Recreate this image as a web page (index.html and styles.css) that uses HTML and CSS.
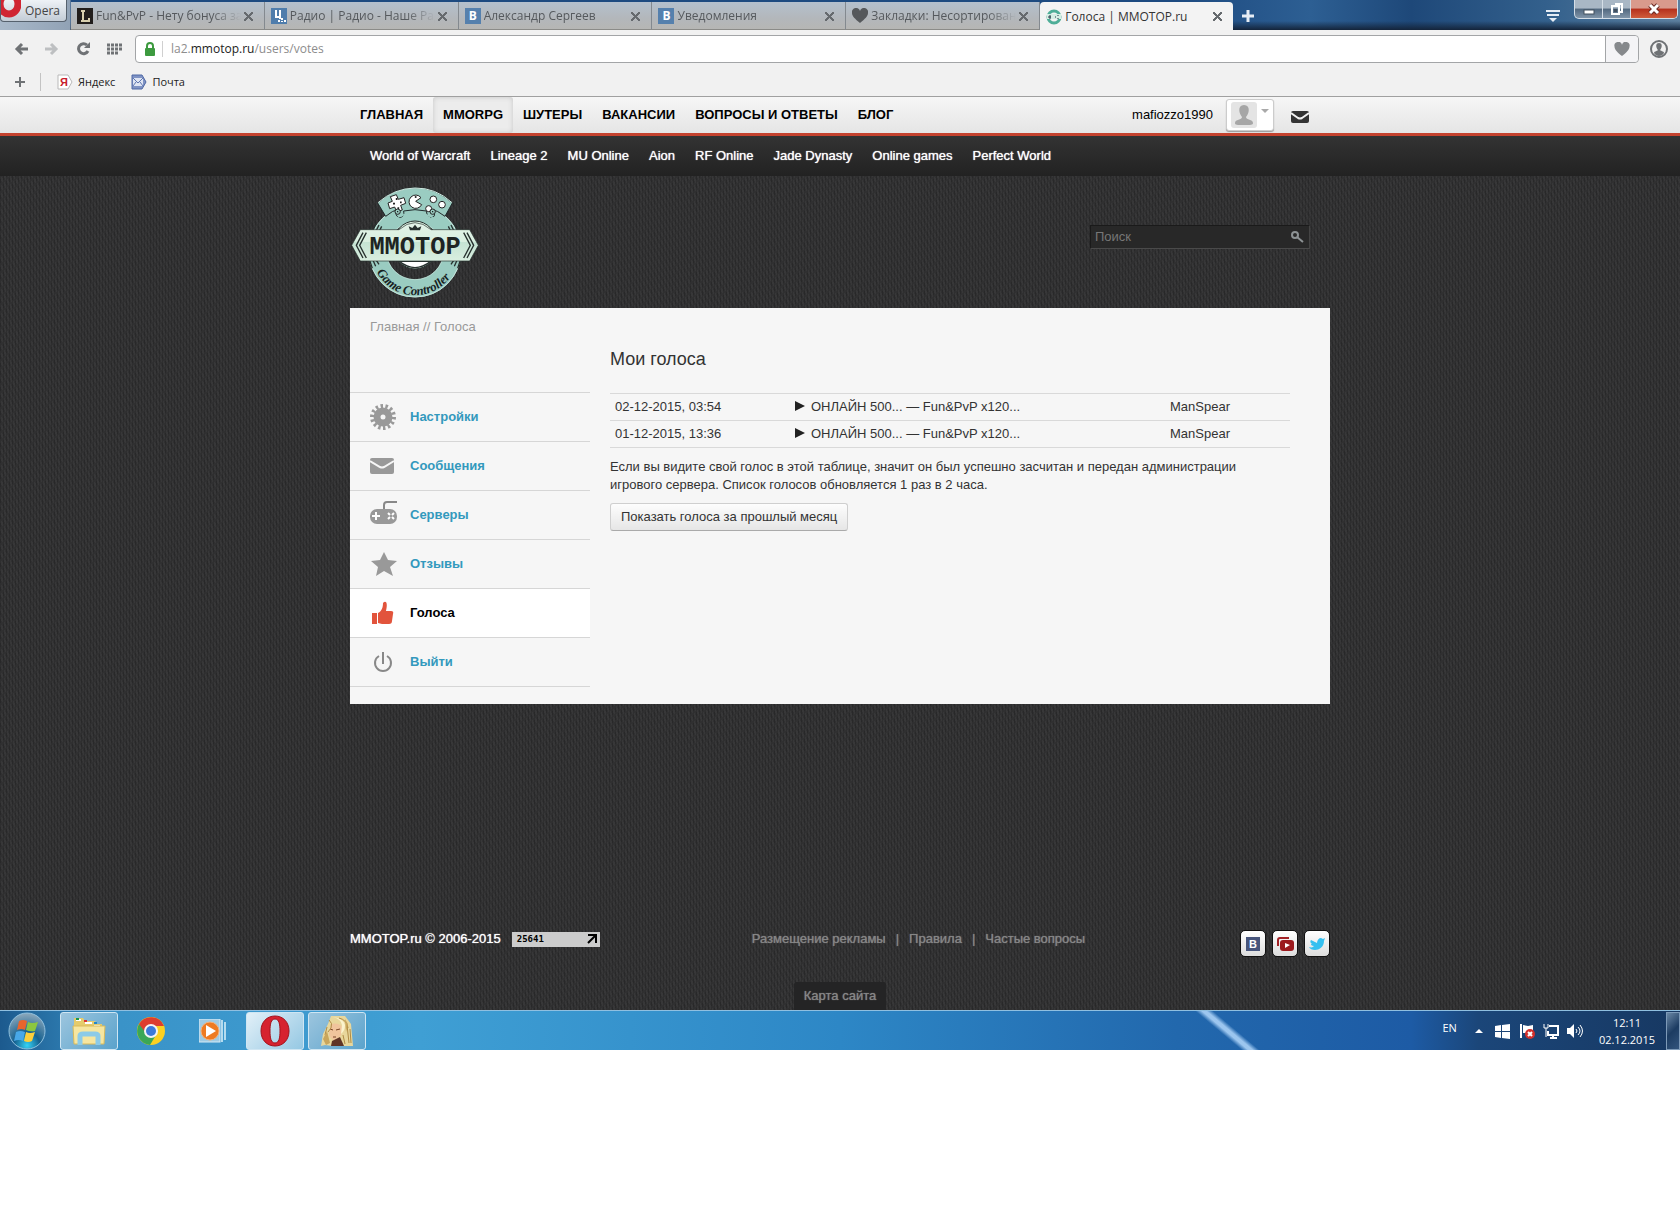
FILE: index.html
```html
<!DOCTYPE html>
<html lang="ru">
<head>
    <meta charset="UTF-8">
    <title>Голоса | MMOTOP.ru</title>
    <link rel="stylesheet" href="styles.css">
</head>
<body>
    <!-- browser window -->
    <header class="browser">
        <div class="titlebar">
            <button type="button" class="opera-btn">
                <svg width="20" height="22" viewBox="0 0 20 22"><ellipse cx="8" cy="4" rx="9" ry="10" fill="none" stroke="#d02532" stroke-width="7"/></svg>
                Opera
            </button>
            <div class="tabs">
                <div class="tab">
                    <svg width="16" height="16" viewBox="0 0 16 16"><rect width="16" height="16" fill="#221e1c"/><path d="M4 3h4M6 3v10M4 13h8v-3" fill="none" stroke="#d8cfae" stroke-width="2"/></svg>
                    <a href="#">Fun&amp;PvP - Нету бонуса за</a>
                    <button type="button" class="close" aria-label="Закрыть"></button>
                </div>
                <div class="tab">
                    <svg width="16" height="16" viewBox="0 0 16 16"><rect width="16" height="16" fill="#4f7dac"/><path d="M5 2v8M5 9h5M9 2v9M8 12v2M11 10v2M11 13v1M14 12v2" fill="none" stroke="#fff" stroke-width="2"/></svg>
                    <a href="#">Радио | Радио - Наше Рад</a>
                    <button type="button" class="close" aria-label="Закрыть"></button>
                </div>
                <div class="tab">
                    <span class="vk">B</span>
                    <a href="#">Александр Сергеев</a>
                    <button type="button" class="close" aria-label="Закрыть"></button>
                </div>
                <div class="tab">
                    <span class="vk">B</span>
                    <a href="#">Уведомления</a>
                    <button type="button" class="close" aria-label="Закрыть"></button>
                </div>
                <div class="tab">
                    <svg width="16" height="16" viewBox="0 0 16 16"><path d="M8 15C3 11 0 8 0 5a4 4 0 0 1 8-2 4 4 0 0 1 8 2c0 3-3 6-8 10z" fill="#55585b"/></svg>
                    <a href="#">Закладки: Несортирован</a>
                    <button type="button" class="close" aria-label="Закрыть"></button>
                </div>
                <div class="tab active">
                    <svg width="16" height="16" viewBox="0 0 16 16"><circle cx="8" cy="8" r="6" fill="none" stroke="#4fae98" stroke-width="3"/><path d="M1 5h14v5H1z" fill="#d5eee4"/><path d="M2 8h3M4 6v4M9 8h1M12 6v1M12 9v1" stroke="#234" stroke-width="1"/></svg>
                    <a href="#">Голоса | MMOTOP.ru</a>
                    <button type="button" class="close" aria-label="Закрыть"></button>
                </div>
            </div>
            <button type="button" class="new-tab" aria-label="Новая вкладка">
                <svg width="12" height="12" viewBox="0 0 12 12"><path d="M6 0v12M0 6h12" stroke="#e6edf5" stroke-width="3"/></svg>
            </button>
            <button type="button" class="tab-menu" aria-label="Меню вкладок">
                <svg width="14" height="14" viewBox="0 0 14 14"><path d="M0 2h14M1 6h12" stroke="#e6edf5" stroke-width="2"/><path d="M3 9h8l-4 4z" fill="#e6edf5"/></svg>
            </button>
            <div class="win-controls">
                <button type="button" aria-label="Свернуть"><svg width="12" height="14" viewBox="0 0 12 14"><rect x="1" y="8" width="10" height="4" fill="#fff" stroke="#42505f"/></svg></button>
                <button type="button" aria-label="Развернуть"><svg width="12" height="14" viewBox="0 0 12 14"><path d="M4 2h7v8h-3M1 4h7v8H1z" fill="none" stroke="#fff" stroke-width="2"/><rect x="3" y="7" width="3" height="3" fill="#42505f"/></svg></button>
                <button type="button" class="win-close" aria-label="Закрыть"><svg width="12" height="12" viewBox="0 0 12 12"><path d="M2 2l8 8M10 2l-8 8" stroke="#6b2a24" stroke-width="5"/><path d="M2 2l8 8M10 2l-8 8" stroke="#fff" stroke-width="3"/></svg></button>
            </div>
        </div>

        <div class="toolbar">
            <button type="button" aria-label="Назад"><svg width="14" height="14" viewBox="0 0 14 14"><path d="M14 7H3M8 2L3 7l5 5" fill="none" stroke="#6f7275" stroke-width="3"/></svg></button>
            <button type="button" aria-label="Вперёд"><svg width="14" height="14" viewBox="0 0 14 14"><path d="M0 7h11M6 2l5 5-5 5" fill="none" stroke="#bdbfc1" stroke-width="3"/></svg></button>
            <button type="button" aria-label="Обновить"><svg width="14" height="14" viewBox="0 0 14 14"><path d="M12 9a5 5 0 1 1-1-6" fill="none" stroke="#6f7275" stroke-width="3"/><path d="M14 0v6H8z" fill="#6f7275"/></svg></button>
            <button type="button" aria-label="Экспресс-панель"><svg width="15" height="12" viewBox="0 0 15 12"><path d="M0 2h15M0 6h15M0 10h11" stroke="#6f7275" stroke-width="3" stroke-dasharray="3 1"/></svg></button>
            <div class="address">
                <svg width="10" height="14" viewBox="0 0 10 14"><path d="M2 7V4a3 3 0 0 1 6 0v3" fill="none" stroke="#3d9a3f" stroke-width="2"/><rect y="6" width="10" height="8" rx="1" fill="#3d9a3f"/></svg>
                <p class="url">la2.<span>mmotop.ru</span>/users/votes</p>
                <button type="button" class="fav" aria-label="В закладки"><svg width="16" height="14" viewBox="0 0 16 15"><path d="M8 15C3 11 0 8 0 5a4 4 0 0 1 8-2 4 4 0 0 1 8 2c0 3-3 6-8 10z" fill="#86898c"/></svg></button>
            </div>
            <button type="button" class="profile" aria-label="Профиль"><svg width="18" height="18" viewBox="0 0 18 18"><circle cx="9" cy="9" r="8" fill="none" stroke="#6f7275" stroke-width="2"/><path d="M9 3c4 0 3 5 1 7 0 1 4 1 4 3-2 4-8 4-10 0 0-2 4-2 4-3-2-2-3-7 1-7z" fill="#6f7275"/></svg></button>
        </div>

        <nav class="bookmarks">
            <button type="button" aria-label="Добавить"><svg width="10" height="10" viewBox="0 0 10 10"><path d="M5 0v10M0 5h10" stroke="#6f7275" stroke-width="2"/></svg></button>
            <a href="#"><svg width="16" height="16" viewBox="0 0 16 16"><path d="M1 1h10l4 7-4 7H1z" fill="#fff" stroke="#b9b9b9"/><text x="3" y="12" class="ya">Я</text></svg>Яндекс</a>
            <a href="#"><svg width="16" height="16" viewBox="0 0 16 16"><path d="M1 1h10l4 7-4 7H1z" fill="#7f93c4" stroke="#4f68a5"/><path d="M2 4h10v8H2z" fill="#dfe5f3"/><path d="M2 4l5 5 5-5M2 12l3-4M12 12L9 8" fill="none" stroke="#6078b0"/></svg>Почта</a>
        </nav>
    </header>

    <!-- site -->
    <div class="site">
        <div class="topline">
            <div class="wrap">
                <nav class="main-nav">
                    <a href="#">ГЛАВНАЯ</a>
                    <a href="#" class="current">MMORPG</a>
                    <a href="#">ШУТЕРЫ</a>
                    <a href="#">ВАКАНСИИ</a>
                    <a href="#">ВОПРОСЫ И ОТВЕТЫ</a>
                    <a href="#">БЛОГ</a>
                </nav>
                <div class="user">
                    <a href="#">mafiozzo1990</a>
                    <button type="button" class="avatar" aria-label="Профиль">
                        <svg width="26" height="26" viewBox="0 0 26 26"><rect width="26" height="26" rx="3" fill="#e4e4e4"/><path d="M13 3c7 0 5 9 2 12 0 3 7 2 7 6 0 2-2 2-9 2s-9 0-9-2c0-4 7-3 7-6-3-3-5-12 2-12z" fill="#a6a6a6"/></svg>
                        <svg width="8" height="4" viewBox="0 0 8 4"><path d="M0 0h8L4 4z" fill="#a9a9a9"/></svg>
                    </button>
                    <a href="#" class="mail" aria-label="Сообщения"><svg width="18" height="12" viewBox="0 0 18 12"><rect width="18" height="12" rx="2" fill="#333"/><path d="M0 2l7 5q2 1 4 0l7-5" fill="none" stroke="#f2f2f2" stroke-width="2"/></svg></a>
                </div>
            </div>
        </div>
        <div class="subline">
            <nav class="wrap sub-nav">
                <a href="#">World of Warcraft</a>
                <a href="#">Lineage 2</a>
                <a href="#">MU Online</a>
                <a href="#">Aion</a>
                <a href="#">RF Online</a>
                <a href="#">Jade Dynasty</a>
                <a href="#">Online games</a>
                <a href="#">Perfect World</a>
            </nav>
        </div>

        <div class="wrap head">
            <a href="#" class="logo" aria-label="MMOTOP">
                <svg width="128" height="112" viewBox="20 20 384 336">
                    <defs>
                        <path id="arc" d="M95 272A131 131 0 0 0 334 262"/>
                        <linearGradient id="plate" x2="0" y2="1"><stop offset="0" stop-color="#e3f3e8"/><stop offset=".5" stop-color="#d9efe0"/><stop offset=".51" stop-color="#c5e3d3"/><stop offset="1" stop-color="#d9efe0"/></linearGradient>
                    </defs>
                    <circle cx="212" cy="212" r="112" fill="none" stroke="#9accc1" stroke-width="54"/>
                    <circle cx="212" cy="212" r="138" fill="none" stroke="#c4e3da" stroke-width="3"/>
                    <circle cx="212" cy="212" r="86" fill="none" stroke="#c4e3da" stroke-width="2"/>
                    <path d="M76 150l8-24M86 150l8-20M96 150l8-16M106 150l6-12M348 150l-8-24M338 150l-8-20M328 150l-8-16M318 150l-6-12M76 240l8 24M86 240l8 18M96 240l8 12M348 240l-8 24M338 240l-8 18M328 240l-8 12" stroke="#26302e" stroke-width="4"/>
                    <path d="M100 68Q150 22 212 22t112 46l-22 40q-22-18-44-22l10 8q8 16-8 18-16-8-14-20-34-8-68 0 4 18-14 20-14-8-6-18l8-8q-22 4-42 22z" fill="#9accc1" stroke="#20292a" stroke-width="3"/>
                    <path d="M101 67Q150 24 212 23t111 44" fill="none" stroke="#cfe9e1" stroke-width="3"/>
                    <path d="M138 49l18-6 6 14 17-5 5 17-15 6 5 14-17 5-6-14-15 5-5-17 13-5z" fill="#fff" stroke="#222" stroke-width="3"/>
                    <path d="M157 53v6M146 70h6M162 86v-5M172 66h-5" stroke="#222" stroke-width="5"/>
                    <path d="M230 52a20 20 0 1 0 2 21l-18-10z" fill="#fff" stroke="#222" stroke-width="3"/><circle cx="214" cy="50" r="3" fill="#222"/>
                    <circle cx="267" cy="57" r="10" fill="#fff" stroke="#222" stroke-width="3"/><circle cx="293" cy="73" r="10" fill="#fff" stroke="#222" stroke-width="3"/><circle cx="253" cy="85" r="9" fill="#fff" stroke="#222" stroke-width="3"/>
                    <circle cx="160" cy="94" r="8" fill="#9accc1" stroke="#222" stroke-width="3"/><circle cx="265" cy="94" r="8" fill="#9accc1" stroke="#222" stroke-width="3"/><circle cx="160" cy="94" r="2"/><circle cx="265" cy="94" r="2"/>
                    <path d="M145 120q67-44 134 0" fill="none" stroke="#9accc1" stroke-width="4"/>
                    <ellipse cx="212" cy="194" rx="66" ry="72" fill="#d9efe0" stroke="#26302e" stroke-width="3"/>
                    <path d="M165 243q47 38 94 0z" fill="#fff" stroke="#26302e" stroke-width="4"/>
                    <path d="M48 148H164Q212 106 260 148H376l26 47-26 47H48L22 195z" fill="url(#plate)" stroke="#26302e" stroke-width="2"/>
                    <path d="M56 157l-20 38 20 38M66 157l-20 38 20 38M368 157l20 38-20 38M358 157l20 38-20 38" fill="none" stroke="#26302e" stroke-width="4"/>
                    <path d="M197 150l-4-12 11 5 8-10 8 10 11-5-4 12z" fill="#26302e"/>
                    <text x="212" y="222" text-anchor="middle" class="logo-name">MMOTOP</text>
                    <text class="logo-sub"><textPath href="#arc" startOffset="4">Game Controller</textPath></text>
                </svg>
            </a>
            <form class="search">
                <input type="text" placeholder="Поиск" aria-label="Поиск">
                <button type="button" aria-label="Найти"><svg width="14" height="12" viewBox="0 0 14 12"><circle cx="5" cy="4" r="3" fill="none" stroke="#8d9294" stroke-width="2"/><path d="M7 6l6 5" stroke="#8d9294" stroke-width="2"/></svg></button>
            </form>
        </div>

        <main class="wrap panel">
            <p class="crumbs"><a href="#">Главная</a> // Голоса</p>
            <div class="columns">
                <nav class="side">
                    <a href="#">
                        <svg width="28" height="28" viewBox="0 0 28 28"><circle cx="13" cy="14" r="6" fill="none" stroke="#999" stroke-width="7"/><circle cx="13" cy="14" r="11" fill="none" stroke="#999" stroke-width="4" pathLength="28" stroke-dasharray="1 1"/></svg>
                        Настройки
                    </a>
                    <a href="#">
                        <svg width="28" height="28" viewBox="0 0 28 28"><rect y="6" width="24" height="16" rx="2" fill="#999"/><path d="M0 9l10 6q2 1 4 0l10-6" fill="none" stroke="#f6f6f6" stroke-width="2"/></svg>
                        Сообщения
                    </a>
                    <a href="#">
                        <svg width="28" height="28" viewBox="0 0 28 28"><path d="M14 8V4q0-3 3-3h10" fill="none" stroke="#888" stroke-width="2"/><rect y="8" width="27" height="15" rx="7" fill="#999"/><path d="M6 11v8M2 15h8" stroke="#fff" stroke-width="2"/><path d="M18 12l2 2M22 16l2 2M22 14l2-2M18 18l2-2" stroke="#fff" stroke-width="2"/></svg>
                        Серверы
                    </a>
                    <a href="#">
                        <svg width="28" height="28" viewBox="0 0 28 28"><path d="M14 2l4 8 9 1-7 6 3 9-9-5-8 5 2-9-7-6 9-1z" fill="#999"/></svg>
                        Отзывы
                    </a>
                    <a href="#" class="current">
                        <svg width="28" height="28" viewBox="0 0 28 28"><path d="M2 14h5v11H2zM8 14c4-2 5-6 5-10 3-3 5 0 3 8h5q3 0 2 3l-1 7q0 3-3 3h-7l-4-1z" fill="#e2543c"/></svg>
                        Голоса
                    </a>
                    <a href="#">
                        <svg width="28" height="28" viewBox="0 0 28 28"><path d="M9 8a8 8 0 1 0 8 0M13 4v12" fill="none" stroke="#888" stroke-width="2"/></svg>
                        Выйти
                    </a>
                </nav>
                <section class="votes">
                    <h1>Мои голоса</h1>
                    <table>
                        <tr>
                            <td class="date">02-12-2015, 03:54</td>
                            <td><span class="play"></span>ОНЛАЙН 500... — Fun&amp;PvP x120...</td>
                            <td class="nick">ManSpear</td>
                        </tr>
                        <tr>
                            <td class="date">01-12-2015, 13:36</td>
                            <td><span class="play"></span>ОНЛАЙН 500... — Fun&amp;PvP x120...</td>
                            <td class="nick">ManSpear</td>
                        </tr>
                    </table>
                    <p>Если вы видите свой голос в этой таблице, значит он был успешно засчитан и передан администрации игрового сервера. Список голосов обновляется 1 раз в 2 часа.</p>
                    <button type="button" class="btn">Показать голоса за прошлый месяц</button>
                </section>
            </div>
        </main>

        <footer class="wrap footer">
            <div class="copy">
                MMOTOP.ru © 2006-2015
                <span class="counter">25641 <svg width="10" height="10" viewBox="0 0 10 10"><path d="M1 1h8v8M9 1L1 9" fill="none" stroke="#000" stroke-width="2"/></svg></span>
            </div>
            <nav class="foot-nav">
                <a href="#">Размещение рекламы</a>
                <span>|</span>
                <a href="#">Правила</a>
                <span>|</span>
                <a href="#">Частые вопросы</a>
            </nav>
            <div class="social">
                <a href="#" aria-label="ВКонтакте"><svg width="14" height="14" viewBox="0 0 14 14"><rect width="14" height="14" fill="#47557c"/><text x="3" y="11" class="soc-b">B</text></svg></a>
                <a href="#" aria-label="YouTube"><svg width="18" height="14" viewBox="0 0 18 14"><path d="M2 9V3q0-2 2-2h9" fill="none" stroke="#a32226" stroke-width="2"/><rect x="4" y="3" width="14" height="11" rx="3" fill="#9c1a1e"/><path d="M9 6v5l5-3z" fill="#fff"/></svg></a>
                <a href="#" aria-label="Twitter"><svg width="16" height="14" viewBox="0 0 16 14"><path d="M0 10c3 1 4 0 5-1-2 0-3-1-3-2h1C1 6 1 4 2 3l6 3c0-3 2-5 4-5l2 1 2-1-1 3c0 6-5 9-9 9-3 0-5-1-6-3z" fill="#35c0f0"/></svg></a>
            </div>
        </footer>
        <div class="sitemap"><a href="#">Карта сайта</a></div>
    </div>

    <!-- taskbar -->
    <footer class="taskbar">
        <button type="button" class="start" aria-label="Пуск">
            <svg width="38" height="38" viewBox="0 0 38 38">
                <defs><radialGradient id="orb" cy=".9" r=".9"><stop offset="0" stop-color="#35d3f5"/><stop offset=".4" stop-color="#14608f"/><stop offset="1" stop-color="#8fa9bc"/></radialGradient></defs>
                <circle cx="19" cy="19" r="18" fill="url(#orb)" stroke="#8fc0dd"/>
                <path d="M11 9q4-2 8 0l-2 9q-4-2-8 0z" fill="#e8652c"/><path d="M20 10q4 2 10 0l-3 9q-5 1-9-1z" fill="#8cc63f"/><path d="M8 20q4-2 9 0l-2 9q-4-2-9 0z" fill="#48a8e8"/><path d="M18 20q4 2 9 0l-3 9q-4 2-8 0z" fill="#fbcf3b"/>
            </svg>
        </button>
        <button type="button" class="task open" aria-label="Проводник">
            <svg width="34" height="30" viewBox="0 0 34 30"><path d="M2 2h9l2 3h10l2 3h5v20H2z" fill="#e5cb6c"/><path d="M4 4h5M13 7h7M22 10h6" stroke="#fff" stroke-width="2"/><path d="M4 3h3" stroke="#1a9850" stroke-width="2"/><path d="M12 5h3" stroke="#d33" stroke-width="2"/><path d="M22 7h3" stroke="#28c" stroke-width="2"/><path d="M1 10h32l-1 18H2z" fill="#f6e6a0" stroke="#d9ba5a"/><path d="M8 29V20q0-2 3-2h12q3 0 3 2v9" fill="none" stroke="#8ccbe8" stroke-width="5"/></svg>
        </button>
        <button type="button" class="task" aria-label="Chrome">
            <svg width="28" height="28" viewBox="0 0 28 28"><circle cx="14" cy="14" r="14" fill="#fbd022"/><path d="M14 14L2 7a14 14 0 0 0 11 21l6-10z" fill="#3aa757"/><path d="M2 7a14 14 0 0 1 25 2H14l-6 6z" fill="#dd3d2e"/><circle cx="14" cy="14" r="7" fill="#f3f3f3"/><circle cx="14" cy="14" r="5" fill="#3c79d8"/></svg>
        </button>
        <button type="button" class="task" aria-label="Проигрыватель">
            <svg width="28" height="24" viewBox="0 0 28 24"><path d="M22 1h2v22h-2M25 3h2v18h-2" fill="#b5dcef"/><rect width="21" height="23" fill="#9fcbe4" stroke="#d5eaf5"/><circle cx="11" cy="12" r="9" fill="#ee7b22" stroke="#f5b27a"/><path d="M7 6v12l10-6z" fill="#fff"/></svg>
        </button>
        <button type="button" class="task open light" aria-label="Opera">
            <svg width="30" height="32" viewBox="0 0 30 32"><path fill-rule="evenodd" d="M15 1c8 0 14 6 14 15s-6 15-14 15S1 25 1 16 7 1 15 1zm0 3c-4 0-5 5-5 12s1 12 5 12 5-5 5-12-1-12-5-12z" fill="#d6222f" stroke="#a3121c"/></svg>
        </button>
        <button type="button" class="task open" aria-label="Lineage II">
            <svg width="32" height="32" viewBox="0 0 32 32"><path d="M10 1h14l6 8 2 22H12l-8-1-4 1 2-12 5-10z" fill="#e8d79c"/><path d="M10 9q8-2 11 3l-1 8-6 6q-5-2-6-7z" fill="#f0c49c"/><path d="M9 14l3 1M15 15l4-1M12 22h3" stroke="#7a4526"/><path d="M12 2q8 2 9 8l-1 9q4-3 4-9-2-7-12-8z" fill="#fbf3cd"/><path d="M8 5q4 3 2 8l-3 4M6 12l-2 8M22 20l2 9M26 10l2 18M29 14l1 14M18 3q8 2 9 10" fill="none" stroke="#b08c45"/><path d="M2 24l4-8 3 12-4 2zM24 4l3 5-2 8z" fill="#c9a65c"/><path d="M11 26l8-4 4 9H10z" fill="#5f3426"/></svg>
        </button>
        <div class="tray">
            <span class="lang">EN</span>
            <svg width="8" height="4" viewBox="0 0 8 4"><path d="M0 4h8L4 0z" fill="#fff"/></svg>
            <svg class="win" width="16" height="16" viewBox="0 0 16 16"><path d="M0 3l6-1v6H0zM7 2l8-1v7H7zM0 9h6v6l-6-1zM7 9h8v7l-8-1z" fill="#fff"/></svg>
            <svg width="16" height="16" viewBox="0 0 16 16"><path d="M2 1v14" stroke="#fff" stroke-width="2"/><path d="M4 2l5 1 5-1v8H4z" fill="#fff"/><circle cx="11" cy="11" r="5" fill="#d22f2b"/><path d="M9 9l4 4M13 9l-4 4" stroke="#fff" stroke-width="2"/></svg>
            <svg width="16" height="16" viewBox="0 0 16 16"><path d="M6 3h9v9H5V8M7 15h7M10 12v3" fill="none" stroke="#fff" stroke-width="2"/><path d="M1 1v4h4V1M3 5v9" fill="none" stroke="#fff"/></svg>
            <svg width="16" height="16" viewBox="0 0 16 16"><path d="M0 5h3l4-4v14l-4-4H0z" fill="#fff"/><path d="M9 6q2 2 0 4M11 4q4 4 0 8M13 2q5 6 0 12" fill="none" stroke="#fff"/></svg>
            <time class="clock">12:11<br>02.12.2015</time>
            <button type="button" class="show-desktop" aria-label="Свернуть все окна"></button>
        </div>
    </footer>
</body>
</html>
```
FILE: styles.css
```css
* {
    box-sizing: border-box;
}
body {
    margin: 0;
    background: #fff;
    font: 13px/18px "Liberation Sans", Arial, sans-serif;
    color: #333;
}
a {
    color: inherit;
    text-decoration: none;
}
button {
    display: flex;
    align-items: center;
    justify-content: center;
    padding: 0;
    border: 0;
    background: none;
    font: inherit;
    color: inherit;
}
svg {
    display: block;
    flex-shrink: 0;
}
.wrap {
    width: 100%;
    max-width: 980px;
    margin: 0 auto;
}

/* browser */
.browser {
    font: 12px/16px "Open Sans", "Noto Sans", sans-serif;
    background: #f1f1f1;
    border-bottom: 1px solid #a0a0a0;
}
.titlebar {
    display: flex;
    height: 30px;
    background: linear-gradient(90deg, #a9b9ca 0, #91a2b5 70px, transparent 71px), linear-gradient(transparent 70%, #14243a), linear-gradient(90deg, #1d4a80 70%, #2d5f93 78%, #1e4879 84%, #33608c 92%, #5c7f9e);
}
.opera-btn {
    width: 67px;
    height: 22px;
    margin-right: 4px;
    gap: 4px;
    justify-content: flex-start;
    border: 1px solid #56616d;
    border-top: 0;
    border-radius: 0 0 4px 4px;
    background: linear-gradient(#eef2f6, #c3ccd6);
    color: #444;
}
.tabs {
    display: flex;
    flex: 0 1 1162px;
    min-width: 0;
    margin-top: 2px;
}
.tab {
    display: flex;
    flex: 1;
    align-items: center;
    gap: 3px;
    min-width: 0;
    padding: 1px 11px 0 6px;
    border-right: 1px solid #83898f;
    border-bottom: 1px solid #8b8b88;
    background: linear-gradient(#b4c0cd, #b3b7bb 60%, #b6b6b4);
    color: #55595d;
}
.tab a {
    flex: 1;
    overflow: hidden;
    white-space: nowrap;
    mask-image: linear-gradient(90deg, #000 80%, transparent);
}
.tab.active {
    border: 0;
    border-radius: 4px 4px 0 0;
    background: #f3f3f3;
    color: #333;
}
.tab.active a {
    mask-image: none;
}
.vk {
    width: 16px;
    height: 16px;
    background: #5580ad;
    color: #fff;
    font-weight: bold;
    text-align: center;
}
.close {
    width: 9px;
    height: 9px;
    background: linear-gradient(45deg, transparent 40%, #666a6e 40%, #666a6e 60%, transparent 60%), linear-gradient(-45deg, transparent 40%, #666a6e 40%, #666a6e 60%, transparent 60%);
}
.new-tab {
    width: 30px;
    padding-top: 2px;
}
.tab-menu {
    width: 20px;
    margin-left: auto;
    margin-right: 11px;
    padding-top: 2px;
}
.win-controls {
    display: flex;
    height: 19px;
    margin-right: 2px;
    border: 1px solid #d5dee7;
    border-top: 0;
    border-radius: 0 0 5px 5px;
    background: linear-gradient(#a9b7c5 45%, #52687f 50%, #8195a9);
    overflow: hidden;
}
.win-controls button {
    width: 28px;
    border-right: 1px solid #d5dee7;
}
.win-controls .win-close {
    width: 46px;
    border: 0;
    background: linear-gradient(#d99a8c 45%, #b5301c 50%, #cf5d3c);
}
.toolbar {
    display: flex;
    align-items: center;
    height: 38px;
    padding: 0 12px 0 14px;
    gap: 17px;
}
.address {
    display: flex;
    flex: 1;
    align-items: center;
    height: 28px;
    margin-left: -4px;
    padding-left: 9px;
    gap: 7px;
    border: 1px solid #a3a5a7;
    border-radius: 4px;
    background: #fff;
}
.url {
    flex: 1;
    margin: 0;
    padding-left: 8px;
    border-left: 1px solid #d0d0d0;
    color: #8d8d8d;
}
.url span {
    color: #222;
}
.fav {
    width: 33px;
    height: 26px;
    border-left: 1px solid #a3a5a7;
    border-radius: 0 4px 4px 0;
    background: #f4f4f6;
}
.profile {
    margin-left: -6px;
}
.bookmarks {
    display: flex;
    align-items: center;
    height: 28px;
    gap: 16px;
    padding: 0 15px;
    font-size: 11px;
    color: #222;
}
.bookmarks button {
    width: 26px;
    height: 18px;
    justify-content: flex-start;
    border-right: 1px solid #c3c3c3;
}
.bookmarks a {
    display: flex;
    align-items: center;
    gap: 5px;
}
.ya {
    font: bold 11px "Liberation Sans", sans-serif;
    fill: #c8202b;
}

/* site */
.site {
    background: repeating-linear-gradient(90deg, rgba(0, 0, 0, .16) 0, rgba(0, 0, 0, .16) 1px, transparent 1px, transparent 3px), repeating-linear-gradient(60deg, #373738 0, #373738 2px, #303031 2px, #303031 4px);
}
.topline {
    border-bottom: 3px solid #c4422e;
    background: linear-gradient(#f6f6f6, #e5e5e5);
    color: #000;
}
.topline .wrap {
    display: flex;
    justify-content: space-between;
    height: 36px;
}
.main-nav {
    display: flex;
    font-weight: bold;
}
.main-nav a {
    padding: 9px 10px 8px;
    white-space: nowrap;
}
.main-nav .current {
    border-radius: 3px;
    background: #ececec;
    box-shadow: inset 0 0 5px #c6c6c6;
}
.user {
    display: flex;
    align-items: center;
    padding-right: 21px;
}
.avatar {
    align-items: flex-start;
    width: 48px;
    height: 32px;
    gap: 4px;
    margin: 0 17px 0 13px;
    padding-top: 2px;
    border: 1px solid #ccc;
    border-radius: 3px;
    background: #fff;
    box-shadow: 0 1px 1px #999;
}
.avatar svg + svg {
    margin-top: 7px;
}
.mail {
    padding-top: 4px;
}
.subline {
    background: linear-gradient(#333, #222);
}
.sub-nav {
    display: flex;
    gap: 20px;
    height: 40px;
    padding: 11px 20px;
    color: #fff;
    text-shadow: 0 0 1px #fff;
}
.head {
    display: flex;
    align-items: flex-start;
    justify-content: space-between;
    height: 132px;
    padding: 11px 20px 0 1px;
}
.search {
    display: flex;
    width: 220px;
    height: 24px;
    margin-top: 38px;
    border: 1px solid #1a1a1a;
    border-right-color: #444;
    border-bottom-color: #4a4a4a;
    background: #282828;
}
.search input {
    flex: 1;
    min-width: 0;
    padding: 0 4px;
    border: 0;
    background: none;
    font: inherit;
    color: #ccc;
}
.search input::placeholder {
    color: #777;
}
.search button {
    width: 24px;
}
.logo-name {
    font: bold 76px "Liberation Mono", monospace;
    fill: #1e2423;
}
.logo-sub {
    font: italic bold 38px "Liberation Serif", serif;
    fill: #16211f;
}

/* content */
.panel {
    padding: 10px 0 17px;
    background: #f6f6f6;
}
.crumbs {
    margin: 0 20px;
    color: #999;
}
.columns {
    display: flex;
    gap: 20px;
}
.side {
    width: 240px;
    margin-top: 56px;
    border-bottom: 1px solid #d6d6d6;
    font-weight: bold;
    color: #3399bd;
}
.side a {
    display: flex;
    align-items: center;
    height: 49px;
    padding-left: 20px;
    gap: 12px;
    border-top: 1px solid #d6d6d6;
}
.side .current {
    background: #fff;
    color: #000;
}
.votes {
    flex: 1;
    padding-right: 40px;
}
.votes h1 {
    margin: 11px 0 22px;
    font-size: 18px;
    line-height: 24px;
    font-weight: normal;
}
.votes table {
    width: 100%;
    border-collapse: collapse;
}
.votes td {
    height: 27px;
    padding: 0 5px;
    border-top: 1px solid #d9d9d9;
    border-bottom: 1px solid #d9d9d9;
}
.votes .date {
    width: 180px;
}
.votes .nick {
    width: 125px;
}
.play {
    display: inline-block;
    margin-right: 6px;
    border: 5px solid transparent;
    border-left: 10px solid #222;
    border-right: 0;
}
.votes p {
    margin: 10px 0 9px;
}
.btn {
    height: 28px;
    padding: 0 10px;
    border: 1px solid #cfcfcf;
    border-bottom-color: #aaa;
    border-radius: 3px;
    background: linear-gradient(#fdfdfd, #e6e6e6);
}

/* footer */
.footer {
    display: grid;
    grid-template-columns: 41fr 38fr 21fr;
    padding-top: 226px;
    color: #fff;
}
.copy {
    display: flex;
    align-items: center;
    gap: 11px;
    height: 18px;
    text-shadow: 0 0 1px #fff;
}
.counter {
    display: flex;
    align-items: center;
    justify-content: space-between;
    width: 88px;
    height: 15px;
    padding: 0 3px 0 5px;
    background: #ccc;
    color: #000;
    font: bold 9px/15px "DejaVu Sans Mono", monospace;
    text-shadow: none;
}
.foot-nav {
    display: flex;
    gap: 10px;
    color: #868686;
    text-shadow: 0 0 1px #868686;
    white-space: nowrap;
}
.social {
    display: flex;
    justify-content: flex-end;
    gap: 6px;
}
.social a {
    display: flex;
    align-items: center;
    justify-content: center;
    width: 26px;
    height: 27px;
    border: 1px solid #111;
    border-radius: 5px;
    background: linear-gradient(#fff, #ddd);
}
.soc-b {
    font: bold 11px "Liberation Sans", sans-serif;
    fill: #fff;
}
.sitemap {
    display: flex;
    justify-content: center;
    padding-top: 25px;
    color: #868686;
    text-shadow: 0 0 1px #868686;
}
.sitemap a {
    padding: 5px 10px;
    border-radius: 3px 3px 0 0;
    background: #242425;
}

/* taskbar */
.taskbar {
    display: flex;
    align-items: center;
    height: 40px;
    border-top: 1px solid #8fbfe0;
    background: linear-gradient(40deg, transparent 42%, #9cc6ef 48%, #9cc6ef 52%, transparent 58%) 74% 0 / 64px 40px no-repeat, linear-gradient(90deg, #1c5a8e 0, #3a93c8 120px, #3f9fd4 25%, #2d87c6 50%, #2268ad 70%, #1d5ba5 84%, #1b4679 88%, #173862);
    font: 11px/17px "Open Sans", "Noto Sans", sans-serif;
    color: #fff;
}
.start {
    width: 54px;
    margin-right: 6px;
}
.task {
    width: 58px;
    height: 38px;
    margin-right: 4px;
    border-radius: 3px;
}
.task.open {
    border: 1px solid #cfe6f3;
    background: linear-gradient(135deg, #9cc5de, #5ba3cc);
}
.task.light {
    background: linear-gradient(135deg, #e2f0f8, #95c8e3);
}
.tray {
    display: flex;
    align-items: center;
    gap: 8px;
    height: 100%;
    margin-left: auto;
}
.lang {
    padding: 0 10px 6px 0;
}
.win {
    margin-left: 4px;
}
.clock {
    margin: 0 3px 0 8px;
    text-align: center;
}
.show-desktop {
    width: 14px;
    height: 38px;
    border: 1px solid #7d9ab8;
    background: linear-gradient(135deg, #6a87a5, #1c3c62 50%, #33557d);
}
```
